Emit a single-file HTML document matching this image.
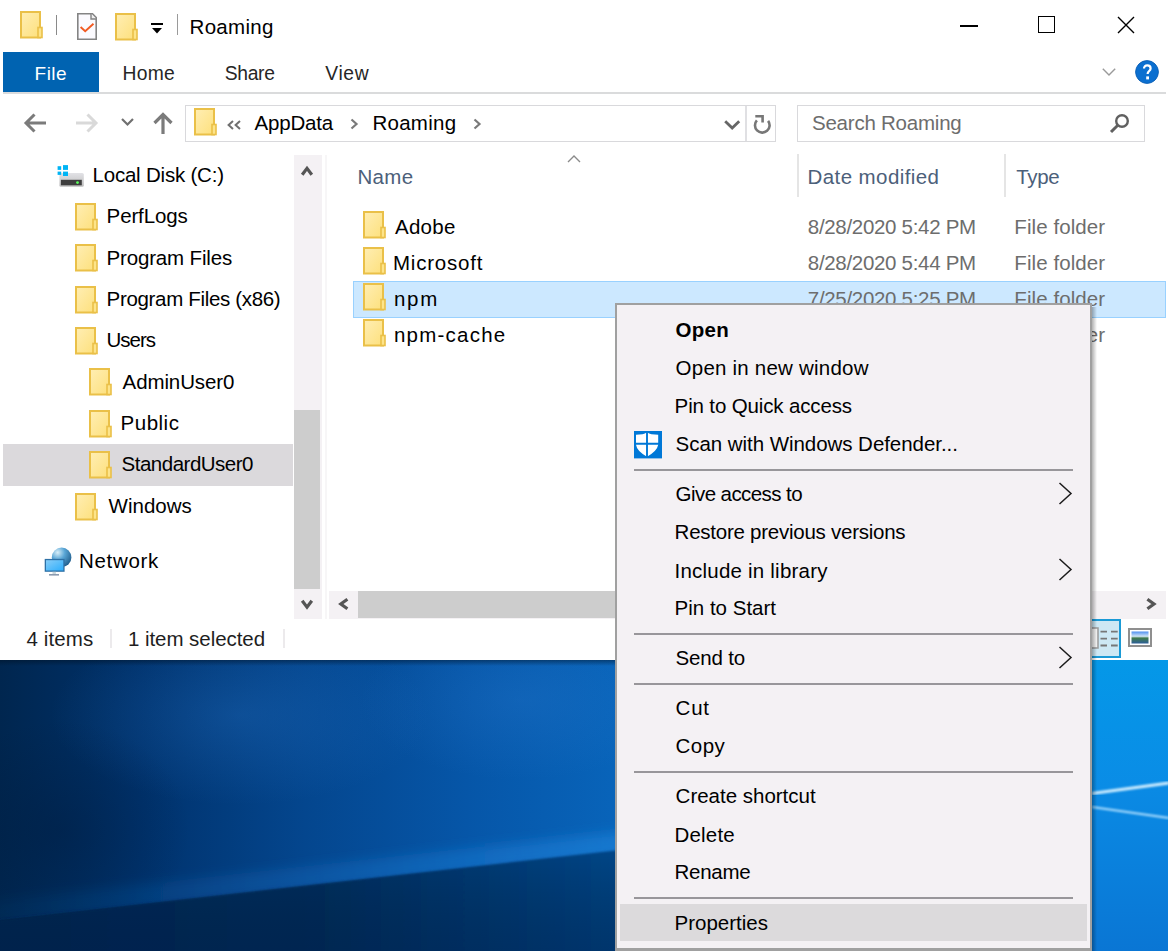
<!DOCTYPE html>
<html><head><meta charset="utf-8">
<style>
*{margin:0;padding:0;box-sizing:border-box}
html,body{width:1169px;height:951px;overflow:hidden;background:#fff}
body{position:relative;font-family:"Liberation Sans",sans-serif;font-size:20px;line-height:20px;color:#000}
.a{position:absolute}
.t{position:absolute;white-space:nowrap;line-height:20px}
svg{position:absolute;overflow:visible}
</style></head><body>
<svg width="0" height="0" style="position:absolute">
 <defs>
  <linearGradient id="fg" x1="0" y1="0" x2="1" y2="1">
   <stop offset="0" stop-color="#ffeeb4"/><stop offset="1" stop-color="#fde07c"/>
  </linearGradient>
  <symbol id="fold" viewBox="0 0 23 28">
   <rect x="1" y="1" width="19" height="25.5" fill="url(#fg)" stroke="#eac048" stroke-width="2"/>
   <rect x="18" y="16.5" width="4" height="10" fill="#fde48a" stroke="#eac048" stroke-width="1.6"/>
  </symbol>
  <symbol id="chev" viewBox="0 0 15 23"><path d="M1.5 1 L13 11.5 L1.5 22" fill="none" stroke="#1b1b1b" stroke-width="1.5"/></symbol>
 </defs>
</svg>

<!-- ===== title bar ===== -->
<svg style="left:20px;top:11px" width="23" height="28"><use href="#fold"/></svg>
<div class="a" style="left:56px;top:15px;width:1px;height:20px;background:#8a8a8a"></div>
<svg style="left:77px;top:13px" width="20" height="27" viewBox="0 0 20 27">
 <path d="M0.8 0.8 H15.5 L19.2 4.5 V26.2 H0.8 Z" fill="#fbfafe" stroke="#848484" stroke-width="1.6"/>
 <path d="M14 0.8 V6 H19.2" fill="#eeeeee" stroke="#848484" stroke-width="1.4"/>
 <path d="M3.6 14 L8.2 18.2 L16.5 10.8" fill="none" stroke="#f15a22" stroke-width="1.9"/>
</svg>
<svg style="left:115px;top:13px" width="23" height="28"><use href="#fold"/></svg>
<div class="a" style="left:151px;top:23px;width:12px;height:2px;background:#000"></div>
<svg style="left:151px;top:28px" width="12" height="6" viewBox="0 0 12 6"><path d="M1 0 H11 L6 5.5Z" fill="#000"/></svg>
<div class="a" style="left:177px;top:14px;width:1px;height:21px;background:#9a9a9a"></div>
<div class="a" style="left:960.3px;top:25px;width:17.4px;height:1.5px;background:#000"></div>
<div class="a" style="left:1038.3px;top:16.4px;width:17px;height:17px;border:1.7px solid #000"></div>
<svg style="left:1117px;top:16px" width="18" height="18" viewBox="0 0 18 18"><path d="M1 1 L17 17 M17 1 L1 17" stroke="#000" stroke-width="1.4"/></svg>

<!-- ===== ribbon ===== -->
<div class="a" style="left:3px;top:52px;width:96px;height:40px;background:#0063b1"></div>
<div class="a" style="left:3px;top:92px;width:1163px;height:2px;background:#dadbdc"></div>
<svg style="left:1102px;top:68px" width="14" height="8" viewBox="0 0 14 8"><path d="M0.8 0.8 L7 7 L13.2 0.8" fill="none" stroke="#9a9a9a" stroke-width="1.4"/></svg>
<svg style="left:1135px;top:59.5px" width="24" height="24" viewBox="0 0 24 24"><circle cx="12" cy="12" r="11.4" fill="#0b6fd0" stroke="#0a5db4" stroke-width="0.9"/>
 <path d="M9 8.6 C9 6.6 10.3 5.4 12.2 5.4 C14.2 5.4 15.6 6.6 15.6 8.4 C15.6 10.9 12.6 11.2 12.6 14" fill="none" stroke="#fff" stroke-width="2.2"/>
 <rect x="11.2" y="16.4" width="2.8" height="3" fill="#fff"/></svg>

<!-- ===== nav row ===== -->
<svg style="left:24px;top:113px" width="23" height="21" viewBox="0 0 23 21"><path d="M22 10 H3 M10.5 1.5 L2 10 L10.5 18.5" fill="none" stroke="#7b7b7b" stroke-width="3"/></svg>
<svg style="left:75px;top:113px" width="23" height="21" viewBox="0 0 23 21"><path d="M1 10 H20 M12.5 1.5 L21 10 L12.5 18.5" fill="none" stroke="#d9d9d9" stroke-width="3"/></svg>
<svg style="left:121px;top:118px" width="13" height="8" viewBox="0 0 13 8"><path d="M1 1 L6.5 6.5 L12 1" fill="none" stroke="#707070" stroke-width="2.2"/></svg>
<svg style="left:153px;top:112px" width="21" height="22" viewBox="0 0 21 22"><path d="M10 22 V3 M1.5 11 L10 2.5 L18.5 11" fill="none" stroke="#7b7b7b" stroke-width="3.2"/></svg>
<div class="a" style="left:185px;top:105px;width:591px;height:37px;border:1.5px solid #d9d9dc"></div>
<div class="a" style="left:745px;top:106px;width:1.5px;height:35px;background:#e0e0e3"></div>
<svg style="left:194px;top:108px" width="23" height="28"><use href="#fold"/></svg>
<svg style="left:226px;top:119.5px" width="16" height="10" viewBox="0 0 16 10"><path d="M7 1 L2.6 5 L7 9 M14 1 L9.6 5 L14 9" fill="none" stroke="#707070" stroke-width="2"/></svg>
<svg style="left:350px;top:118px" width="9" height="12" viewBox="0 0 9 12"><path d="M1.5 1.5 L6.5 6 L1.5 10.5" fill="none" stroke="#7a7a7a" stroke-width="2.2"/></svg>
<svg style="left:473px;top:118px" width="9" height="12" viewBox="0 0 9 12"><path d="M1.5 1.5 L6.5 6 L1.5 10.5" fill="none" stroke="#7a7a7a" stroke-width="2.2"/></svg>
<svg style="left:724px;top:120px" width="17" height="10" viewBox="0 0 17 10"><path d="M1.2 1.2 L8.2 8 L15.2 1.2" fill="none" stroke="#666" stroke-width="2.8"/></svg>
<svg style="left:753px;top:113px" width="19" height="22" viewBox="0 0 19 22"><path d="M3.9 7.4 A7.3 7.3 0 1 0 15.1 7.9" fill="none" stroke="#777" stroke-width="2.6"/><path d="M2.3 3.2 H9.6 V9.4" fill="none" stroke="#777" stroke-width="2.6"/></svg>
<div class="a" style="left:797px;top:105px;width:348px;height:37px;border:1.5px solid #d9d9dc"></div>
<svg style="left:1109px;top:113px" width="21" height="21" viewBox="0 0 21 21"><circle cx="13" cy="8" r="5.8" fill="none" stroke="#606060" stroke-width="2.4"/><path d="M8.8 12.2 L2 19" stroke="#606060" stroke-width="3"/></svg>

<!-- ===== nav pane ===== -->
<div class="a" style="left:3px;top:444.3px;width:289.5px;height:41.5px;background:#dbd9dc"></div>
<svg style="left:52px;top:160px" width="36" height="30" viewBox="0 0 36 30">
 <defs><linearGradient id="dv" x1="0" y1="0" x2="0" y2="1"><stop offset="0" stop-color="#e2e2e6"/><stop offset="1" stop-color="#bdbdbd"/></linearGradient></defs>
 <rect x="7.4" y="13" width="24.4" height="13.7" rx="1.5" fill="url(#dv)"/>
 <rect x="8.9" y="19.8" width="20.9" height="5.5" fill="#3e3e3e"/>
 <circle cx="25.5" cy="22.6" r="1.4" fill="#5cff5c"/>
 <rect x="5.6" y="6.2" width="3.6" height="3.7" fill="#00b4f5"/>
 <rect x="11" y="5.1" width="5" height="4.8" fill="#00b4f5"/>
 <rect x="5.6" y="11.6" width="3.6" height="3.3" fill="#00b4f5"/>
 <rect x="11" y="11.6" width="5" height="4.4" fill="#00b4f5"/>
</svg>
<svg style="left:75px;top:203px" width="23" height="28"><use href="#fold"/></svg>
<svg style="left:75px;top:244px" width="23" height="28"><use href="#fold"/></svg>
<svg style="left:75px;top:286px" width="23" height="28"><use href="#fold"/></svg>
<svg style="left:75px;top:327px" width="23" height="28"><use href="#fold"/></svg>
<svg style="left:89px;top:368px" width="23" height="28"><use href="#fold"/></svg>
<svg style="left:89px;top:410px" width="23" height="28"><use href="#fold"/></svg>
<svg style="left:89px;top:451px" width="23" height="28"><use href="#fold"/></svg>
<svg style="left:75px;top:493px" width="23" height="28"><use href="#fold"/></svg>
<svg style="left:44px;top:548px" width="30" height="30" viewBox="0 0 30 30">
 <defs><radialGradient id="gl" cx="0.3" cy="0.25" r="0.8"><stop offset="0" stop-color="#d8eef8"/><stop offset=".45" stop-color="#5aa6d6"/><stop offset="1" stop-color="#22608f"/></radialGradient>
 <linearGradient id="scr" x1="0" y1="0" x2="1" y2="1"><stop offset="0" stop-color="#86cdf8"/><stop offset="1" stop-color="#2eaefc"/></linearGradient></defs>
 <circle cx="17.6" cy="9.4" r="9.8" fill="url(#gl)"/>
 <rect x="0.7" y="10.9" width="19.9" height="12.9" fill="#2d70a6"/>
 <rect x="2" y="12.2" width="17.3" height="10.3" fill="url(#scr)"/>
 <rect x="8.5" y="23.8" width="3.4" height="2.2" fill="#c9d6dc"/>
 <rect x="5" y="26" width="10" height="1.6" fill="#8b9bb0"/>
</svg>
<div class="a" style="left:294px;top:154.5px;width:28px;height:464px;background:#f4f1f4"></div>
<div class="a" style="left:294px;top:410px;width:26px;height:179px;background:#cdcdcd"></div>
<svg style="left:301px;top:164.5px" width="12" height="11" viewBox="0 0 12 11"><path d="M1.2 9.8 L6 3.4 L10.8 9.8" fill="none" stroke="#555" stroke-width="3.2" stroke-linejoin="miter"/></svg>
<svg style="left:301px;top:599.5px" width="12" height="11" viewBox="0 0 12 11"><path d="M1.2 0.8 L6 7.2 L10.8 0.8" fill="none" stroke="#555" stroke-width="3.2" stroke-linejoin="miter"/></svg>
<div class="a" style="left:325px;top:154.5px;width:1.5px;height:464px;background:#f7f6f7"></div>

<!-- ===== file list ===== -->
<svg style="left:567px;top:155px" width="14" height="8" viewBox="0 0 14 8"><path d="M1 7 L7 1 L13 7" fill="none" stroke="#8a8a8a" stroke-width="1.4"/></svg>
<div class="a" style="left:797px;top:154px;width:1.5px;height:43px;background:#e5e5e5"></div>
<div class="a" style="left:1004px;top:154px;width:1.5px;height:43px;background:#e5e5e5"></div>
<div class="a" style="left:353px;top:281px;width:813px;height:37px;background:#cce8ff;border:1px solid #99d1ff"></div>
<svg style="left:363px;top:211px" width="23" height="28"><use href="#fold"/></svg>
<svg style="left:363px;top:247px" width="23" height="28"><use href="#fold"/></svg>
<svg style="left:363px;top:283px" width="23" height="28"><use href="#fold"/></svg>
<svg style="left:363px;top:319px" width="23" height="28"><use href="#fold"/></svg>
<div class="a" style="left:329px;top:591px;width:837px;height:27.5px;background:#f4f1f4"></div>
<div class="a" style="left:358px;top:591px;width:650px;height:27px;background:#cdcdcd"></div>
<svg style="left:337px;top:598px" width="11" height="12" viewBox="0 0 11 12"><path d="M10.4 1.2 L3.8 6 L10.4 10.8" fill="none" stroke="#555" stroke-width="3.2" stroke-linejoin="miter"/></svg>
<svg style="left:1147px;top:598px" width="11" height="12" viewBox="0 0 11 12"><path d="M0.4 1.2 L7 6 L0.4 10.8" fill="none" stroke="#555" stroke-width="3.2" stroke-linejoin="miter"/></svg>

<!-- ===== status bar ===== -->
<div class="a" style="left:110px;top:629px;width:1.5px;height:19px;background:#eceaec"></div>
<div class="a" style="left:283px;top:629px;width:1.5px;height:19px;background:#eceaec"></div>
<div class="a" style="left:1080px;top:619px;width:41px;height:39px;background:#cde8f4;border:2px solid #1a9ad6"></div>
<svg style="left:1090px;top:628px" width="30" height="22" viewBox="0 0 30 22">
 <rect x="0" y="0" width="8" height="20" fill="#f4f4f4" stroke="#999" stroke-width="1.5"/>
 <path d="M10.5 3.7 H17 M21 3.7 H27.7 M10.5 10.6 H17 M21 10.6 H27.7 M10.5 17.5 H17 M21 17.5 H27.7" stroke="#777" stroke-width="1.8"/>
</svg>
<svg style="left:1128px;top:627.5px" width="24" height="19" viewBox="0 0 24 19">
 <rect x="1" y="1" width="22" height="17" fill="#fff" stroke="#8f8f8f" stroke-width="2"/>
 <defs><linearGradient id="li" x1="0" y1="0" x2="0" y2="1"><stop offset="0" stop-color="#4d8ff0"/><stop offset=".4" stop-color="#cfe3f5"/><stop offset=".55" stop-color="#3f7a4c"/><stop offset="1" stop-color="#2d5f9a"/></linearGradient></defs>
 <rect x="3.5" y="3.5" width="17" height="12" fill="url(#li)"/>
</svg>

<div class="t" style="left:189.6px;top:16.5px;font-size:20.5px;letter-spacing:0.28px;color:#000;">Roaming</div>
<div class="t" style="left:34.6px;top:63.8px;font-size:19px;letter-spacing:0.47px;color:#fff;">File</div>
<div class="t" style="left:122.4px;top:64.3px;font-size:19.3px;letter-spacing:0.33px;color:#262626;">Home</div>
<div class="t" style="left:224.7px;top:64.3px;font-size:19.3px;letter-spacing:-0.30px;color:#262626;">Share</div>
<div class="t" style="left:325.3px;top:64.3px;font-size:19.3px;letter-spacing:0.63px;color:#262626;">View</div>
<div class="t" style="left:254.5px;top:113.0px;font-size:20.5px;letter-spacing:-0.20px;color:#000;">AppData</div>
<div class="t" style="left:372.4px;top:113.0px;font-size:20.5px;letter-spacing:0.28px;color:#000;">Roaming</div>
<div class="t" style="left:812.0px;top:113.0px;font-size:20.5px;letter-spacing:-0.23px;color:#6d6d6d;">Search Roaming</div>
<div class="t" style="left:92.5px;top:165.4px;font-size:20.5px;letter-spacing:-0.21px;color:#000;">Local Disk (C:)</div>
<div class="t" style="left:106.6px;top:206.4px;font-size:20.5px;letter-spacing:-0.14px;color:#000;">PerfLogs</div>
<div class="t" style="left:106.6px;top:247.7px;font-size:20.5px;letter-spacing:-0.17px;color:#000;">Program Files</div>
<div class="t" style="left:106.6px;top:289.0px;font-size:20.5px;letter-spacing:-0.33px;color:#000;">Program Files (x86)</div>
<div class="t" style="left:106.6px;top:330.3px;font-size:20.5px;letter-spacing:-1.05px;color:#000;">Users</div>
<div class="t" style="left:122.6px;top:371.6px;font-size:20.5px;letter-spacing:-0.11px;color:#000;">AdminUser0</div>
<div class="t" style="left:120.6px;top:412.9px;font-size:20.5px;letter-spacing:0.50px;color:#000;">Public</div>
<div class="t" style="left:121.6px;top:454.2px;font-size:20.5px;letter-spacing:-0.50px;color:#000;">StandardUser0</div>
<div class="t" style="left:108.6px;top:495.5px;font-size:20.5px;letter-spacing:0.00px;color:#000;">Windows</div>
<div class="t" style="left:79.0px;top:551.3px;font-size:20.5px;letter-spacing:0.67px;color:#000;">Network</div>
<div class="t" style="left:357.4px;top:166.8px;font-size:20.5px;letter-spacing:0.33px;color:#4c607a;">Name</div>
<div class="t" style="left:807.5px;top:167.0px;font-size:20.5px;letter-spacing:0.42px;color:#4c607a;">Date modified</div>
<div class="t" style="left:1016.3px;top:167.0px;font-size:20.5px;letter-spacing:-0.40px;color:#4c607a;">Type</div>
<div class="t" style="left:395.0px;top:217.0px;font-size:20.5px;letter-spacing:0.25px;color:#000;">Adobe</div>
<div class="t" style="left:807.8px;top:217.0px;font-size:20.5px;letter-spacing:-0.31px;color:#6d6d6d;">8/28/2020 5:42 PM</div>
<div class="t" style="left:1014.3px;top:217.0px;font-size:20.5px;letter-spacing:0.08px;color:#6d6d6d;">File folder</div>
<div class="t" style="left:393.0px;top:253.0px;font-size:20.5px;letter-spacing:0.78px;color:#000;">Microsoft</div>
<div class="t" style="left:807.8px;top:253.0px;font-size:20.5px;letter-spacing:-0.31px;color:#6d6d6d;">8/28/2020 5:44 PM</div>
<div class="t" style="left:1014.3px;top:253.0px;font-size:20.5px;letter-spacing:0.08px;color:#6d6d6d;">File folder</div>
<div class="t" style="left:394.0px;top:289.0px;font-size:20.5px;letter-spacing:1.70px;color:#000;">npm</div>
<div class="t" style="left:807.8px;top:289.0px;font-size:20.5px;letter-spacing:-0.31px;color:#6d6d6d;">7/25/2020 5:25 PM</div>
<div class="t" style="left:1014.3px;top:289.0px;font-size:20.5px;letter-spacing:0.08px;color:#6d6d6d;">File folder</div>
<div class="t" style="left:394.0px;top:325.0px;font-size:20.5px;letter-spacing:1.22px;color:#000;">npm-cache</div>
<div class="t" style="left:807.8px;top:325.0px;font-size:20.5px;letter-spacing:-0.31px;color:#6d6d6d;">7/25/2020 5:25 PM</div>
<div class="t" style="left:1014.3px;top:325.0px;font-size:20.5px;letter-spacing:0.08px;color:#6d6d6d;">File folder</div>
<div class="t" style="left:26.5px;top:629.1px;font-size:20.5px;letter-spacing:0.10px;color:#1e1e1e;">4 items</div>
<div class="t" style="left:128.0px;top:629.1px;font-size:20.5px;letter-spacing:-0.06px;color:#1e1e1e;">1 item selected</div>

<!-- ===== desktop ===== -->
<svg style="left:0;top:660px;overflow:hidden" width="1168" height="291" viewBox="0 660 1168 291">
 <defs>
  <linearGradient id="dg1" x1="0" y1="0" x2="1169" y2="0" gradientUnits="userSpaceOnUse">
   <stop offset="0" stop-color="#00264f"/><stop offset="0.12" stop-color="#00326c"/><stop offset="0.26" stop-color="#04468e"/>
   <stop offset="0.4" stop-color="#0656a8"/><stop offset="0.53" stop-color="#0864ba"/><stop offset="0.93" stop-color="#0a90e8"/><stop offset="1" stop-color="#05a2f2"/>
  </linearGradient>
  <linearGradient id="dg2" x1="0" y1="0" x2="1169" y2="0" gradientUnits="userSpaceOnUse">
   <stop offset="0" stop-color="#002a58"/><stop offset="0.27" stop-color="#002f60"/><stop offset="0.4" stop-color="#003a74"/>
   <stop offset="0.53" stop-color="#024688"/><stop offset="0.93" stop-color="#0a80dc"/><stop offset="1" stop-color="#0890e6"/>
  </linearGradient>
  <linearGradient id="dg3" x1="0" y1="660" x2="0" y2="951" gradientUnits="userSpaceOnUse">
   <stop offset="0" stop-color="#000" stop-opacity="0.12"/><stop offset="0.5" stop-color="#000" stop-opacity="0"/>
  </linearGradient>
  <filter id="blur6"><feGaussianBlur stdDeviation="6"/></filter>
  <filter id="blur2"><feGaussianBlur stdDeviation="1.2"/></filter>
 </defs>
 <rect x="0" y="660" width="1169" height="291" fill="url(#dg1)"/>
 <radialGradient id="lt1" cx="0.5" cy="0.5" r="0.5"><stop offset="0" stop-color="#2a7ad0" stop-opacity="0.28"/><stop offset="1" stop-color="#2a7ad0" stop-opacity="0"/></radialGradient>
 <radialGradient id="dk1" cx="0.5" cy="0.5" r="0.5"><stop offset="0" stop-color="#001838" stop-opacity="0.35"/><stop offset="1" stop-color="#001838" stop-opacity="0"/></radialGradient>
 <ellipse cx="240" cy="715" rx="190" ry="90" fill="url(#lt1)"/>
 <ellipse cx="520" cy="700" rx="160" ry="80" fill="url(#lt1)"/>
 <ellipse cx="60" cy="830" rx="130" ry="110" fill="url(#dk1)"/>
 <linearGradient id="wsh" x1="0" y1="660" x2="0" y2="666" gradientUnits="userSpaceOnUse"><stop offset="0" stop-color="#001020" stop-opacity="0.45"/><stop offset="1" stop-color="#001020" stop-opacity="0"/></linearGradient>
 <rect x="0" y="660" width="1169" height="6" fill="url(#wsh)"/>
 
 <linearGradient id="glw" x1="0" y1="0" x2="615" y2="0" gradientUnits="userSpaceOnUse"><stop offset="0" stop-color="#1d7fd8" stop-opacity="0.05"/><stop offset="0.5" stop-color="#1d7fd8" stop-opacity="0.25"/><stop offset="1" stop-color="#2288e0" stop-opacity="0.55"/></linearGradient>
 <path d="M-20 902 L620 832 L1169 770 L1169 800 L620 858 L-20 925 Z" fill="url(#glw)" filter="url(#blur6)"/>
 <filter id="blur1"><feGaussianBlur stdDeviation="1.3"/></filter>
 <path d="M-30 923.4 L620 850 L1200 783.5 L1200 990 L-30 990 Z" fill="url(#dg2)" filter="url(#blur1)"/>
 <linearGradient id="fdark" x1="0" y1="850" x2="0" y2="951" gradientUnits="userSpaceOnUse"><stop offset="0" stop-color="#000" stop-opacity="0"/><stop offset="1" stop-color="#001030" stop-opacity="0.3"/></linearGradient>
 <path d="M-30 923.4 L620 850 L1085 797 L1085 990 L-30 990 Z" fill="url(#fdark)"/>
 <linearGradient id="rs1" x1="0" y1="660" x2="0" y2="790" gradientUnits="userSpaceOnUse"><stop offset="0" stop-color="#0498e8"/><stop offset="1" stop-color="#0a8ce6"/></linearGradient>
 <linearGradient id="rs2" x1="0" y1="790" x2="0" y2="951" gradientUnits="userSpaceOnUse"><stop offset="0" stop-color="#0a8ae4"/><stop offset="1" stop-color="#0a76d4"/></linearGradient>
 <path d="M1085 660 H1169 V782 L1085 793 Z" fill="url(#rs1)"/>
 <path d="M1085 793 L1169 782 V951 H1085 Z" fill="url(#rs2)"/>
 <path d="M1092 793.5 L1169 783" stroke="#d0eeff" stroke-width="3" filter="url(#blur2)"/>
 <path d="M1092 807 L1169 818" stroke="#b0e0ff" stroke-width="2.2" filter="url(#blur2)"/>
</svg>

<!-- ===== context menu ===== -->
<div class="a" style="left:1092px;top:307px;width:5px;height:644px;background:linear-gradient(90deg,rgba(0,0,0,.3),rgba(0,0,0,0))"></div>
<div class="a" style="left:615px;top:303px;width:477px;height:648px;background:#f4f1f4;border:2px solid #a0a0a0;border-bottom:3px solid #a0a0a0"></div>
<svg style="left:634px;top:430.7px" width="28" height="27.4" viewBox="0 0 28 27.4">
 <rect x="0" y="0" width="28" height="27.4" fill="#0078d7"/>
 <path d="M2 3.8 L8.5 3.2 Q11 2.6 13 1.2 Q15 2.6 17.5 3.2 L24.2 3.8 V13.8 Q23.2 20 13 25.8 Q2.8 20 2 13.8 Z" fill="#fff"/>
 <path d="M13 0.5 V26.5 M1.5 12.8 H25" stroke="#0078d7" stroke-width="1.9"/>
</svg>
<div class="a" style="left:634px;top:468.5px;width:439px;height:2px;background:#98969a"></div>
<div class="a" style="left:634px;top:632.5px;width:439px;height:2px;background:#98969a"></div>
<div class="a" style="left:634px;top:682.5px;width:439px;height:2px;background:#98969a"></div>
<div class="a" style="left:634px;top:770.5px;width:439px;height:2px;background:#98969a"></div>
<div class="a" style="left:634px;top:896.5px;width:439px;height:2px;background:#98969a"></div>
<div class="a" style="left:620px;top:904px;width:467px;height:37px;background:#dcdadc"></div>
<svg style="left:1058px;top:482px" width="15" height="23"><use href="#chev"/></svg>
<svg style="left:1058px;top:558px" width="15" height="23"><use href="#chev"/></svg>
<svg style="left:1058px;top:646px" width="15" height="23"><use href="#chev"/></svg>
<div class="t" style="left:675.6px;top:320.4px;font-size:20.5px;font-weight:bold;letter-spacing:0.27px;color:#000;">Open</div>
<div class="t" style="left:675.6px;top:358.0px;font-size:20.5px;letter-spacing:0.22px;color:#000;">Open in new window</div>
<div class="t" style="left:674.6px;top:396.3px;font-size:20.5px;letter-spacing:-0.14px;color:#000;">Pin to Quick access</div>
<div class="t" style="left:675.6px;top:433.9px;font-size:20.5px;letter-spacing:-0.05px;color:#000;">Scan with Windows Defender...</div>
<div class="t" style="left:675.6px;top:484.0px;font-size:20.5px;letter-spacing:-0.57px;color:#000;">Give access to</div>
<div class="t" style="left:674.6px;top:522.3px;font-size:20.5px;letter-spacing:-0.25px;color:#000;">Restore previous versions</div>
<div class="t" style="left:674.6px;top:560.6px;font-size:20.5px;letter-spacing:0.21px;color:#000;">Include in library</div>
<div class="t" style="left:674.6px;top:598.0px;font-size:20.5px;letter-spacing:0.00px;color:#000;">Pin to Start</div>
<div class="t" style="left:675.6px;top:648.1px;font-size:20.5px;letter-spacing:-0.17px;color:#000;">Send to</div>
<div class="t" style="left:675.6px;top:698.1px;font-size:20.5px;letter-spacing:0.75px;color:#000;">Cut</div>
<div class="t" style="left:675.6px;top:736.3px;font-size:20.5px;letter-spacing:0.43px;color:#000;">Copy</div>
<div class="t" style="left:675.6px;top:786.2px;font-size:20.5px;letter-spacing:-0.01px;color:#000;">Create shortcut</div>
<div class="t" style="left:674.6px;top:824.7px;font-size:20.5px;letter-spacing:0.16px;color:#000;">Delete</div>
<div class="t" style="left:674.6px;top:862.1px;font-size:20.5px;letter-spacing:-0.30px;color:#000;">Rename</div>
<div class="t" style="left:674.6px;top:912.6px;font-size:20.5px;letter-spacing:-0.01px;color:#000;">Properties</div>
</body></html>
